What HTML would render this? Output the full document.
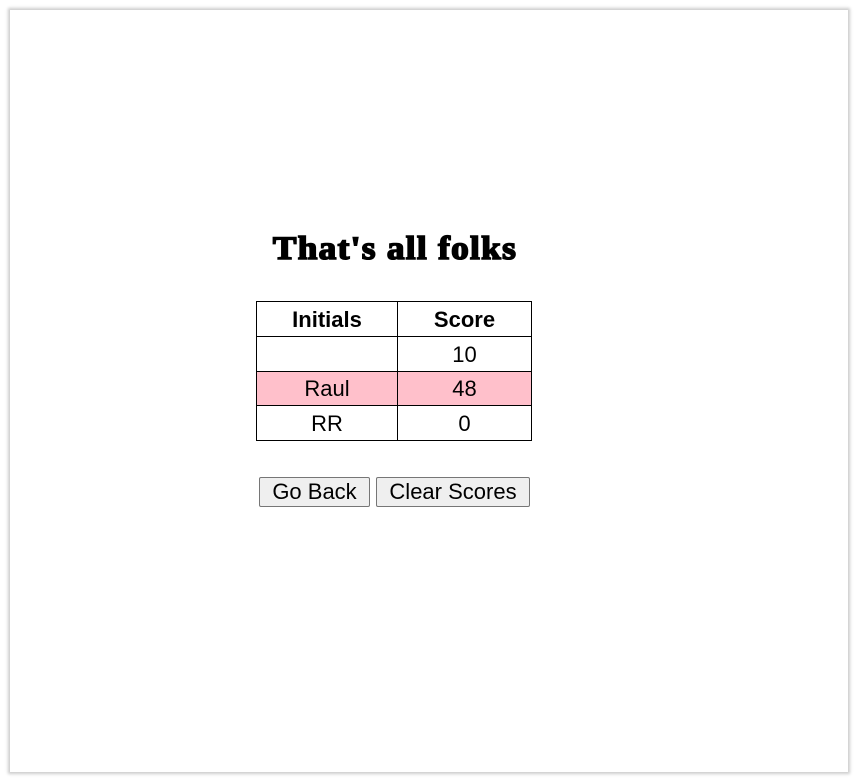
<!DOCTYPE html>
<html><head><style>
html,body{margin:0;padding:0;background:#fff;}
.frame{position:absolute;left:10px;top:10px;width:838px;height:762px;background:#fff;box-shadow:0 0 3px 2px #ccc;}
h1{position:absolute;left:200px;top:231px;width:390px;margin:0;text-align:center;font:900 33px "Liberation Serif",serif;letter-spacing:1.2px;-webkit-text-stroke:1.6px #000;transform:scaleX(1.07);}
table{position:absolute;left:256px;top:301px;border-collapse:collapse;font:22px "Liberation Sans",sans-serif;}
td,th{border:1px solid #000;height:34px;padding:2px 0 0 0;box-sizing:border-box;text-align:center;line-height:30px;}
tr{height:34.8px}
th{font-weight:bold;}
.c1{width:141px}.c2{width:134px}
.pink td{background:#ffc0cb;}
button{position:absolute;top:477px;height:30px;font:22px "Liberation Sans",sans-serif;background:#efefef;border:1px solid #767676;border-radius:2px;padding:0;line-height:28px;}
</style></head><body>
<div class="frame"></div>
<h1>That's all folks</h1>
<table>
<tr><th class="c1">Initials</th><th class="c2">Score</th></tr>
<tr><td></td><td>10</td></tr>
<tr class="pink"><td>Raul</td><td>48</td></tr>
<tr><td>RR</td><td>0</td></tr>
</table>
<button style="left:259px;width:111px">Go Back</button>
<button style="left:376px;width:154px">Clear Scores</button>
</body></html>
